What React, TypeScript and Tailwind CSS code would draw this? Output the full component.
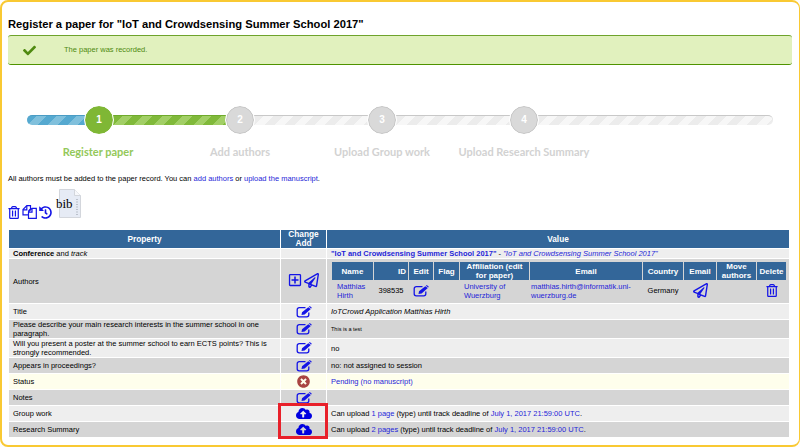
import { FaCheck, FaCloudUploadAlt, FaHistory, FaRegPaperPlane, FaRegPlusSquare, FaRegTrashAlt, FaTimesCircle } from 'react-icons/fa';

function Link({ children }: { children: React.ReactNode }) {
  return <span className="text-[#1f1fd8]">{children}</span>;
}

function Edit() {
  return (
    <svg viewBox="0 0 16 12" className="mx-auto -my-[1px] block h-[12px] w-[16px] text-[#1414e6]" fill="none">
      <path d="M9.5 1.7H3.2A2 2 0 0 0 1.2 3.700v5.100a2 2 0 0 0 2 2h7.600a2 2 0 0 0 2-2V6.500" stroke="currentColor" strokeWidth="1.300" />
      <path d="M6 6.300 12.300 1.200 14.800 3 8.600 8.400 5.500 9z" fill="currentColor" />
      <path d="M12.900 0.700 13.800 0.100 15.800 1.700 15.200 2.500z" fill="currentColor" />
    </svg>
  );
}

function Files() {
  return (
    <svg viewBox="0 0 15 14" className="h-[14px] w-[15px] text-[#1414e6]" fill="none" stroke="currentColor" strokeWidth="1.200">
      <path d="M6.500 9.800H1V4.500L4.800 0.700H8.500V4L6.500 6" />
      <path d="M1 4.800H4.800V1" />
      <path d="M6.500 13.300V6.800L10 3.400H14.300V13.300z" />
      <path d="M6.500 7.200H10V3.600" />
    </svg>
  );
}

function Upload() {
  return <FaCloudUploadAlt className="mx-auto -my-[1px] h-[13px] w-[16px] text-[#0000e0]" />;
}

function Step({ n, active }: { n: number; active?: boolean }) {
  return (
    <div
      className={`z-10 flex h-[28px] w-[28px] shrink-0 items-center justify-center rounded-full text-[10px] font-bold text-white outline outline-[1px] outline-white ${
        active ? 'bg-[#7fb735]' : 'border border-[#c4c4c4] bg-[#d9d9d9]'
      }`}
    >
      {n}
    </div>
  );
}

const grayBar =
  'h-[10px] border-t border-[#c8c8c8] bg-[repeating-linear-gradient(135deg,#ececec_0px,#ececec_7px,#f7f7f7_7px,#f7f7f7_14px)]';

const hd = 'bg-[#336699] font-bold text-white text-center';

export default function App() {
  return (
    <div className="h-[447px] w-[800px] overflow-hidden bg-[#fdfdfd] font-['Liberation_Sans',Arial,sans-serif]">
      <div className="relative h-[447px] w-[800px] rounded-lg border-[2px] border-r-[1px] border-[#f9c933] bg-white px-[6px]">
        <h1 className="pt-[13px] text-[11.2px] font-bold leading-[18px] text-black">
          Register a paper for "IoT and Crowdsensing Summer School 2017"
        </h1>
        <div className="mt-[2px] flex h-[30px] w-[784px] items-center rounded-[3px] border-t border-b border-t-[#6ea32c] border-b-[#4f9300] bg-[#e1f1be] text-[7.5px] text-[#4f8a10]">
          <FaCheck className="ml-[15px] text-[13px] text-[#4f8a10]" />
          <span className="ml-[28px]">The paper was recorded.</span>
        </div>

        <div className="ml-[19px] mt-[40px] flex h-[29px] w-[746px] items-center">
          <div className="h-[10px] w-[58px] rounded-l-full border-t border-[#4a9cc4] bg-[repeating-linear-gradient(135deg,#55a9d0_0px,#55a9d0_7px,#80c0dc_7px,#80c0dc_14px)]" />
          <Step n={1} active />
          <div className="h-[10px] w-[113px] border-t border-[#6faa2c] bg-[repeating-linear-gradient(135deg,#80b93a_0px,#80b93a_7px,#a2cf66_7px,#a2cf66_14px)]" />
          <Step n={2} />
          <div className={`${grayBar} w-[114px]`} />
          <Step n={3} />
          <div className={`${grayBar} w-[114px]`} />
          <Step n={4} />
          <div className={`${grayBar} flex-1 rounded-r-full`} />
        </div>
        <div className="ml-[19px] mt-[11px] grid grid-cols-[142px_142px_142px_142px] text-center font-['Lato',sans-serif] text-[11px] font-bold leading-[14px] text-[#d2d2d2]">
          <div className="text-[#93c85a]">Register paper</div>
          <div>Add authors</div>
          <div>Upload Group work</div>
          <div>Upload Research Summary</div>
        </div>

        <p className="mt-[15px] text-[7.5px] leading-[10px] text-black">
          All authors must be added to the paper record. You can <Link>add authors</Link> or <Link>upload the manuscript</Link>.
        </p>

        <div className="mt-[4px] flex h-[31px] items-end">
          <div className="flex items-center gap-[2px] text-[#1414e6]">
            <FaRegTrashAlt className="h-[13px] w-[12px]" />
            <Files />
            <FaHistory className="h-[13px] w-[13px]" />
          </div>
          <div className="relative mb-[1px] ml-[7px] h-[29px] w-[22px]">
            <svg viewBox="0 0 22 29" className="h-[29px] w-[22px]">
              <path d="M0.500 0.500h15l6 6v22H0.500z" fill="#e6ebf5" stroke="#d3d6dc" />
              <path d="M15.500 0.500v6h6" fill="#f7f8fb" stroke="#d3d6dc" />
              <path d="M18 10v16" stroke="#8f96a2" strokeDasharray="1 1.500" />
            </svg>
            <span className="absolute left-[-3px] top-[8px] font-['Liberation_Serif',serif] text-[13px] leading-[14px] text-black">bib</span>
          </div>
        </div>

        <div className="relative mt-[10px] w-[782px]">
          <table className="w-[782px] table-fixed border-separate border-spacing-[1px] text-[7.5px] leading-[9px] text-black">
            <colgroup>
              <col className="w-[271px]" />
              <col className="w-[45px]" />
              <col />
            </colgroup>
            <tbody>
              <tr className="h-[18px]">
                <td className={`${hd} text-[8.3px]`}>Property</td>
                <td className={`${hd} text-[8.3px]`}>Change Add</td>
                <td className={`${hd} text-[8.3px]`}>Value</td>
              </tr>
              <tr className="h-[9px] bg-[#eeeeee]">
                <td className="px-1"><b>Conference</b> and <i>track</i></td>
                <td />
                <td className="px-[4px] text-[#1f1fd8]">
                  <b>"IoT and Crowdsensing Summer School 2017"</b> <span className="text-black">-</span> <i>"IoT and Crowdsensing Summer School 2017"</i>
                </td>
              </tr>
              <tr className="h-[44px] bg-[#d5d5d5]">
                <td className="px-1">Authors</td>
                <td className="text-center">
                  <span className="inline-flex items-center gap-[2px] text-[#1414e6]">
                    <FaRegPlusSquare className="text-[14px]" />
                    <FaRegPaperPlane className="text-[15px]" />
                  </span>
                </td>
                <td className="px-[4px]">
                  <table className="w-[456px] table-fixed border-separate border-spacing-[1px] leading-[9px]">
                    <colgroup>
                      <col className="w-[41px]" />
                      <col className="w-[34px]" />
                      <col className="w-[24px]" />
                      <col className="w-[25px]" />
                      <col className="w-[69px]" />
                      <col className="w-[112px]" />
                      <col className="w-[40px]" />
                      <col className="w-[32px]" />
                      <col className="w-[39px]" />
                      <col />
                    </colgroup>
                    <tbody>
                      <tr className="h-[18px] text-[8px]">
                        <td className={hd}>Name</td>
                        <td className={`${hd} !text-right pr-[2px]`}>ID</td>
                        <td className={hd}>Edit</td>
                        <td className={hd}>Flag</td>
                        <td className={hd}>Affiliation (edit<br />for paper)</td>
                        <td className={hd}>Email</td>
                        <td className={hd}>Country</td>
                        <td className={hd}>Email</td>
                        <td className={hd}>Move authors</td>
                        <td className={hd}>Delete</td>
                      </tr>
                      <tr className="h-[19px]">
                        <td className="px-[5px] text-[#1f1fd8]">Matthias Hirth</td>
                        <td className="text-center">398535</td>
                        <td><Edit /></td>
                        <td />
                        <td className="px-[4px] text-[#1f1fd8]">University of Wuerzburg</td>
                        <td className="pl-[1px] text-[#1f1fd8]">matthias.hirth@informatik.uni-wuerzburg.de</td>
                        <td className="text-center">Germany</td>
                        <td><FaRegPaperPlane className="mx-auto text-[15px] text-[#1414e6]" /></td>
                        <td />
                        <td><FaRegTrashAlt className="mx-auto h-[13px] w-[12px] text-[#1414e6]" /></td>
                      </tr>
                    </tbody>
                  </table>
                </td>
              </tr>
              <tr className="h-[15px] bg-[#eeeeee]">
                <td className="px-1">Title</td>
                <td><Edit /></td>
                <td className="px-[4px] italic">IoTCrowd Application Matthias Hirth</td>
              </tr>
              <tr className="h-[18px] bg-[#d5d5d5]">
                <td className="px-1">Please describe your main research interests in the summer school in one paragraph.</td>
                <td><Edit /></td>
                <td className="px-[4px] text-[5.5px]">This is a test</td>
              </tr>
              <tr className="h-[18px] bg-[#eeeeee]">
                <td className="px-1">Will you present a poster at the summer school to earn ECTS points? This is strongly recommended.</td>
                <td><Edit /></td>
                <td className="px-[4px]">no</td>
              </tr>
              <tr className="h-[15px] bg-[#d5d5d5]">
                <td className="px-1">Appears in proceedings?</td>
                <td><Edit /></td>
                <td className="px-[4px]">no: not assigned to session</td>
              </tr>
              <tr className="h-[15px] bg-[#fefeec]">
                <td className="px-1">Status</td>
                <td><FaTimesCircle className="mx-auto text-[13px] text-[#a94442]" /></td>
                <td className="px-[4px] text-[#1f1fd8]">Pending (no manuscript)</td>
              </tr>
              <tr className="h-[15px] bg-[#d5d5d5]">
                <td className="px-1">Notes</td>
                <td><Edit /></td>
                <td />
              </tr>
              <tr className="h-[15px] bg-[#eeeeee]">
                <td className="px-1">Group work</td>
                <td><Upload /></td>
                <td className="px-[4px]">Can upload <Link>1 page</Link> (type) until track deadline of <Link>July 1, 2017 21:59:00 UTC</Link>.</td>
              </tr>
              <tr className="h-[15px] bg-[#d5d5d5]">
                <td className="px-1">Research Summary</td>
                <td><Upload /></td>
                <td className="px-[4px]">Can upload <Link>2 pages</Link> (type) until track deadline of <Link>July 1, 2017 21:59:00 UTC</Link>.</td>
              </tr>
            </tbody>
          </table>
          <div className="absolute bottom-[-1px] left-[270px] h-[36px] w-[50px] border-[3px] border-[#e8202a]" />
        </div>
      </div>
    </div>
  );
}
